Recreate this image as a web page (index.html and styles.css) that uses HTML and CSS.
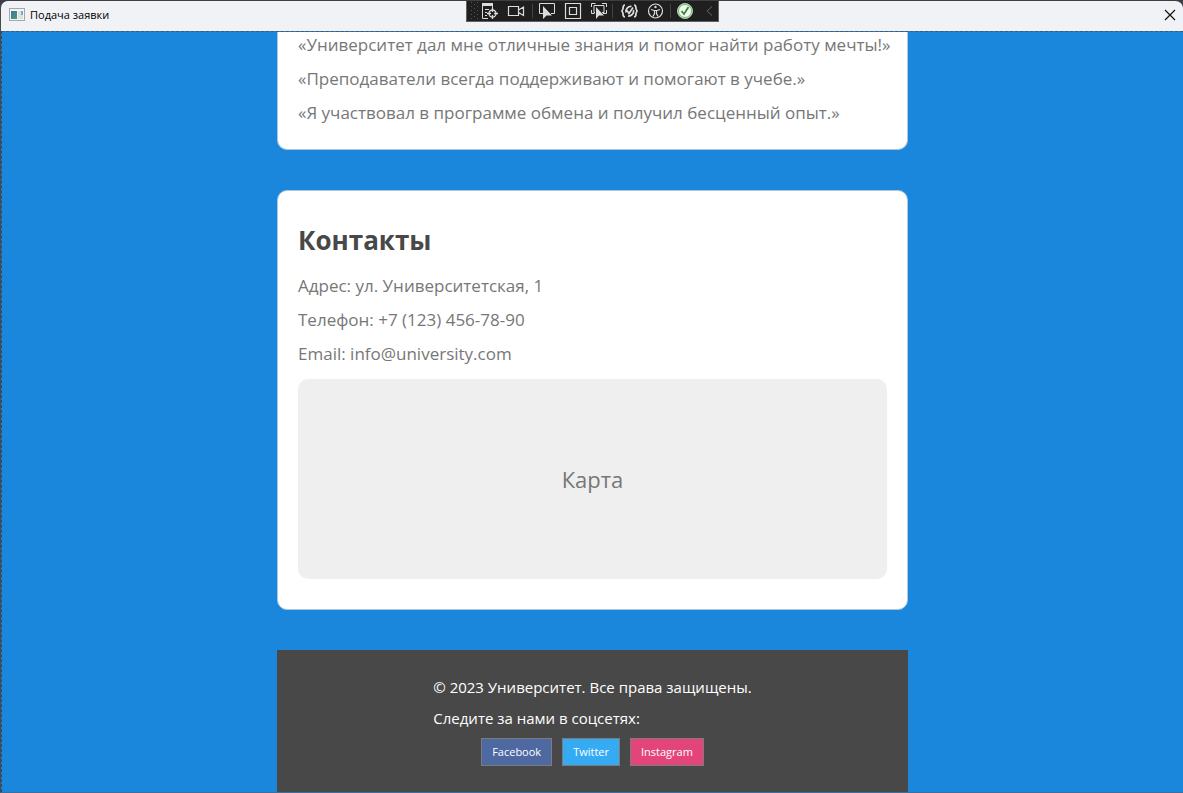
FILE: index.html
```html
<!DOCTYPE html>
<html lang="ru">
<head>
<meta charset="utf-8">
<title>Подача заявки</title>
<link rel="stylesheet" href="styles.css">
</head>
<body>
<div class="window">
  <header class="titlebar">
    <svg class="app-icon" width="16" height="14" viewBox="0 0 16 14" aria-hidden="true">
      <defs><linearGradient id="pane" x1="0" y1="0" x2="1" y2="1"><stop offset="0" stop-color="#3f78a6"/><stop offset="1" stop-color="#4d9a68"/></linearGradient></defs>
      <rect x=".5" y=".5" width="15" height="12" fill="#f4f4f4" stroke="#a5a8ab"/>
      <rect x="2" y="3" width="6" height="8" fill="url(#pane)"/>
      <rect x="9" y="3" width="3" height="8" fill="#dfe2e4"/>
      <rect x="12" y="3" width="2" height="4" fill="#7fa3cc"/>
      <rect x="12" y="7" width="2" height="4" fill="#d9e4dc"/>
    </svg>
    <h1 class="title">Подача заявки</h1>
    <button class="close" aria-label="Закрыть">
      <svg width="12" height="12" viewBox="0 0 12 12"><path d="M1 1l10 10M11 1L1 11" stroke="#111" stroke-width="1.2"/></svg>
    </button>
  </header>

  <div class="debugbar">
    <svg width="251" height="21" viewBox="1 0 251 21" fill="none" stroke="#dcdcdc" aria-hidden="true">
      <path d="M5.500 2v18M11.500 2v18" stroke="#555" stroke-dasharray="1 3"/>
      <path d="M8.500 4v16" stroke="#555" stroke-dasharray="1 3"/>
      <path d="M16 3h11v3H16z" fill="#dcdcdc" stroke="none"/>
      <path d="M16.500 5v13.500H22M19 9.500h4M19 12.500h2M19 15.500h2M26.500 6v2"/>
      <circle cx="26.500" cy="13.500" r="3.500" stroke-width="1.300"/><path d="M26.500 8v4M26.500 15v4M21 13.500h4M28 13.500h4" stroke-width="1.300"/>
      <path d="M42.500 6.500h10v9h-10zM52.500 10l5-3v8.500l-5-3" stroke-width="1.200"/>
      <path d="M66.500 4v14M146.500 4v14M204.500 4v14" stroke="#434343"/>
      <path d="M77 13.500h-3.500v-10h15v10H85"/>
      <path d="M77 6v13l3.500-3.500H86z" fill="#dcdcdc" stroke="none"/>
      <path d="M99.500 3.500h15v15h-15zM103.500 7.500h7v7h-7z" stroke-width="1.200"/>
      <path d="M125.500 7V3.500h4M136 3.500h4.500V7M125.500 10v3.500h3M137 13.500h3.500V10M129 12.500h-1v-7h10v7h-2"/>
      <path d="M130 7v12l3-3.500h5z" fill="#dcdcdc" stroke="none"/>
      <path d="M159 5c-2 0-2 2-2 3.500S156 10 156 11s1 1 1 2.500S157 17 159 17M168 5c2 0 2 2 2 3.500s1 1.500 1 2.500-1 1-1 2.500 0 3.500-2 3.500" stroke-width="1.700"/>
      <path d="M165.500 6.500a5 5 0 0 0-5.500 6M162 16a5 5 0 0 0 5.500-6M161 10.500l2 3 4-6" stroke-width="1.700"/>
      <circle cx="189.500" cy="11" r="7" stroke-width="1.200"/><circle cx="189.500" cy="7" r="1.200" fill="#dcdcdc" stroke="none"/>
      <path d="M185 9.500l3 1h3l3-1M188.500 10.500v3l-1.500 3M190.500 10.500v3l1.500 3" stroke-width="1.200"/>
      <circle cx="219" cy="11" r="7.500" fill="#f4f8f2" stroke="#a9d2a6"/><circle cx="219" cy="11" r="6.500" stroke="#4ba150" stroke-width=".8"/>
      <path d="M215.500 11l2.500 3 4.500-7" stroke="#328a37" stroke-width="1.800"/>
      <path d="M246 6.500l-5 4.500 5 4.500" stroke="#666"/>
    </svg>
  </div>

  <main class="page">
    <section class="card card-reviews">
      <p>«Университет дал мне отличные знания и помог найти работу мечты!»</p>
      <p>«Преподаватели всегда поддерживают и помогают в учебе.»</p>
      <p>«Я участвовал в программе обмена и получил бесценный опыт.»</p>
    </section>

    <section class="card card-contacts">
      <h2>Контакты</h2>
      <p>Адрес: ул. Университетская, 1</p>
      <p>Телефон: +7 (123) 456-78-90</p>
      <p>Email: info@university.com</p>
      <div class="map">Карта</div>
    </section>

    <footer class="footer">
      <div class="footer-inner">
        <p>© 2023 Университет. Все права защищены.</p>
        <p>Следите за нами в соцсетях:</p>
        <nav class="social">
          <button class="facebook">Facebook</button>
          <button class="twitter">Twitter</button>
          <button class="instagram">Instagram</button>
        </nav>
      </div>
    </footer>
  </main>
</div>
</body>
</html>
```
FILE: styles.css
```css
* { box-sizing: border-box; }

body {
  margin: 0;
  background: #3f3f42;
  font-family: "Segoe UI", "Open Sans", "Noto Sans", sans-serif;
}

h1, h2, p { margin: 0; }

.window {
  position: relative;
  display: flex;
  flex-direction: column;
  height: 100vh;
  overflow: hidden;
  border-top: 1px solid #3f3f42;
  border-left: 1px solid #4a4a4d;
  border-bottom: 1px solid #3f6f98;
  border-radius: 8px 8px 0 0;
  background: #1a86dc;
}

.titlebar {
  display: flex;
  flex: none;
  align-items: center;
  height: 30px;
  padding: 0 7px 2px 8px;
  background: #f1f2f6;
}

.app-icon { margin-right: 5px; }

.title {
  flex: 1;
  font-size: 11px;
  font-weight: 400;
  line-height: 16px;
  color: #000;
}

.close {
  display: flex;
  padding: 0;
  border: 0;
  background: none;
}

.debugbar {
  position: absolute;
  top: -1px;
  left: 50%;
  display: flex;
  height: 22px;
  margin-left: -126px;
  border: solid #606060;
  border-width: 0 1px 1px;
  background: #1f1f1f;
}

.page {
  display: flex;
  flex: 1;
  flex-direction: column;
  align-items: center;
  gap: 40px;
  min-height: 0;
  overflow: hidden;
  border-top: 1px dashed #45586a;
  border-left: 1px dashed #294e6d;
}

.card {
  flex: none;
  width: 100%;
  max-width: 631px;
  padding: 30px 20px;
  border: 1px solid #a9c6df;
  border-radius: 10px;
  background: #fff;
}

.card p {
  margin-bottom: 10px;
  font-size: 17px;
  line-height: 24px;
  color: #777;
}

.card-reviews {
  padding-top: 1px;
  padding-bottom: 14px;
  border-top: 0;
  border-radius: 0 0 10px 10px;
}

.card-reviews p { white-space: nowrap; }

.card h2 {
  margin-bottom: 15px;
  font-size: 26px;
  line-height: 38px;
  color: #484848;
}

.map {
  display: flex;
  align-items: center;
  justify-content: center;
  height: 200px;
  margin-top: 13px;
  border-radius: 10px;
  background: #efefef;
  font-size: 22px;
  color: #777;
}

.footer {
  display: flex;
  flex: none;
  justify-content: center;
  width: 100%;
  max-width: 631px;
  padding: 26px 20px;
  background: #484848;
}

.footer p {
  margin-bottom: 8px;
  font-size: 15px;
  line-height: 23px;
  color: #fff;
}

.social {
  display: flex;
  justify-content: center;
  gap: 10px;
}

.social button {
  height: 28px;
  padding: 0 10px;
  border: 1px solid #7c7c7c;
  font: 11px/16px "Segoe UI", "Open Sans", "Noto Sans", sans-serif;
  color: #fff;
}

.facebook { background: #4e69a2; }
.twitter { background: #35abf3; }
.instagram { background: #e3457b; }
```
